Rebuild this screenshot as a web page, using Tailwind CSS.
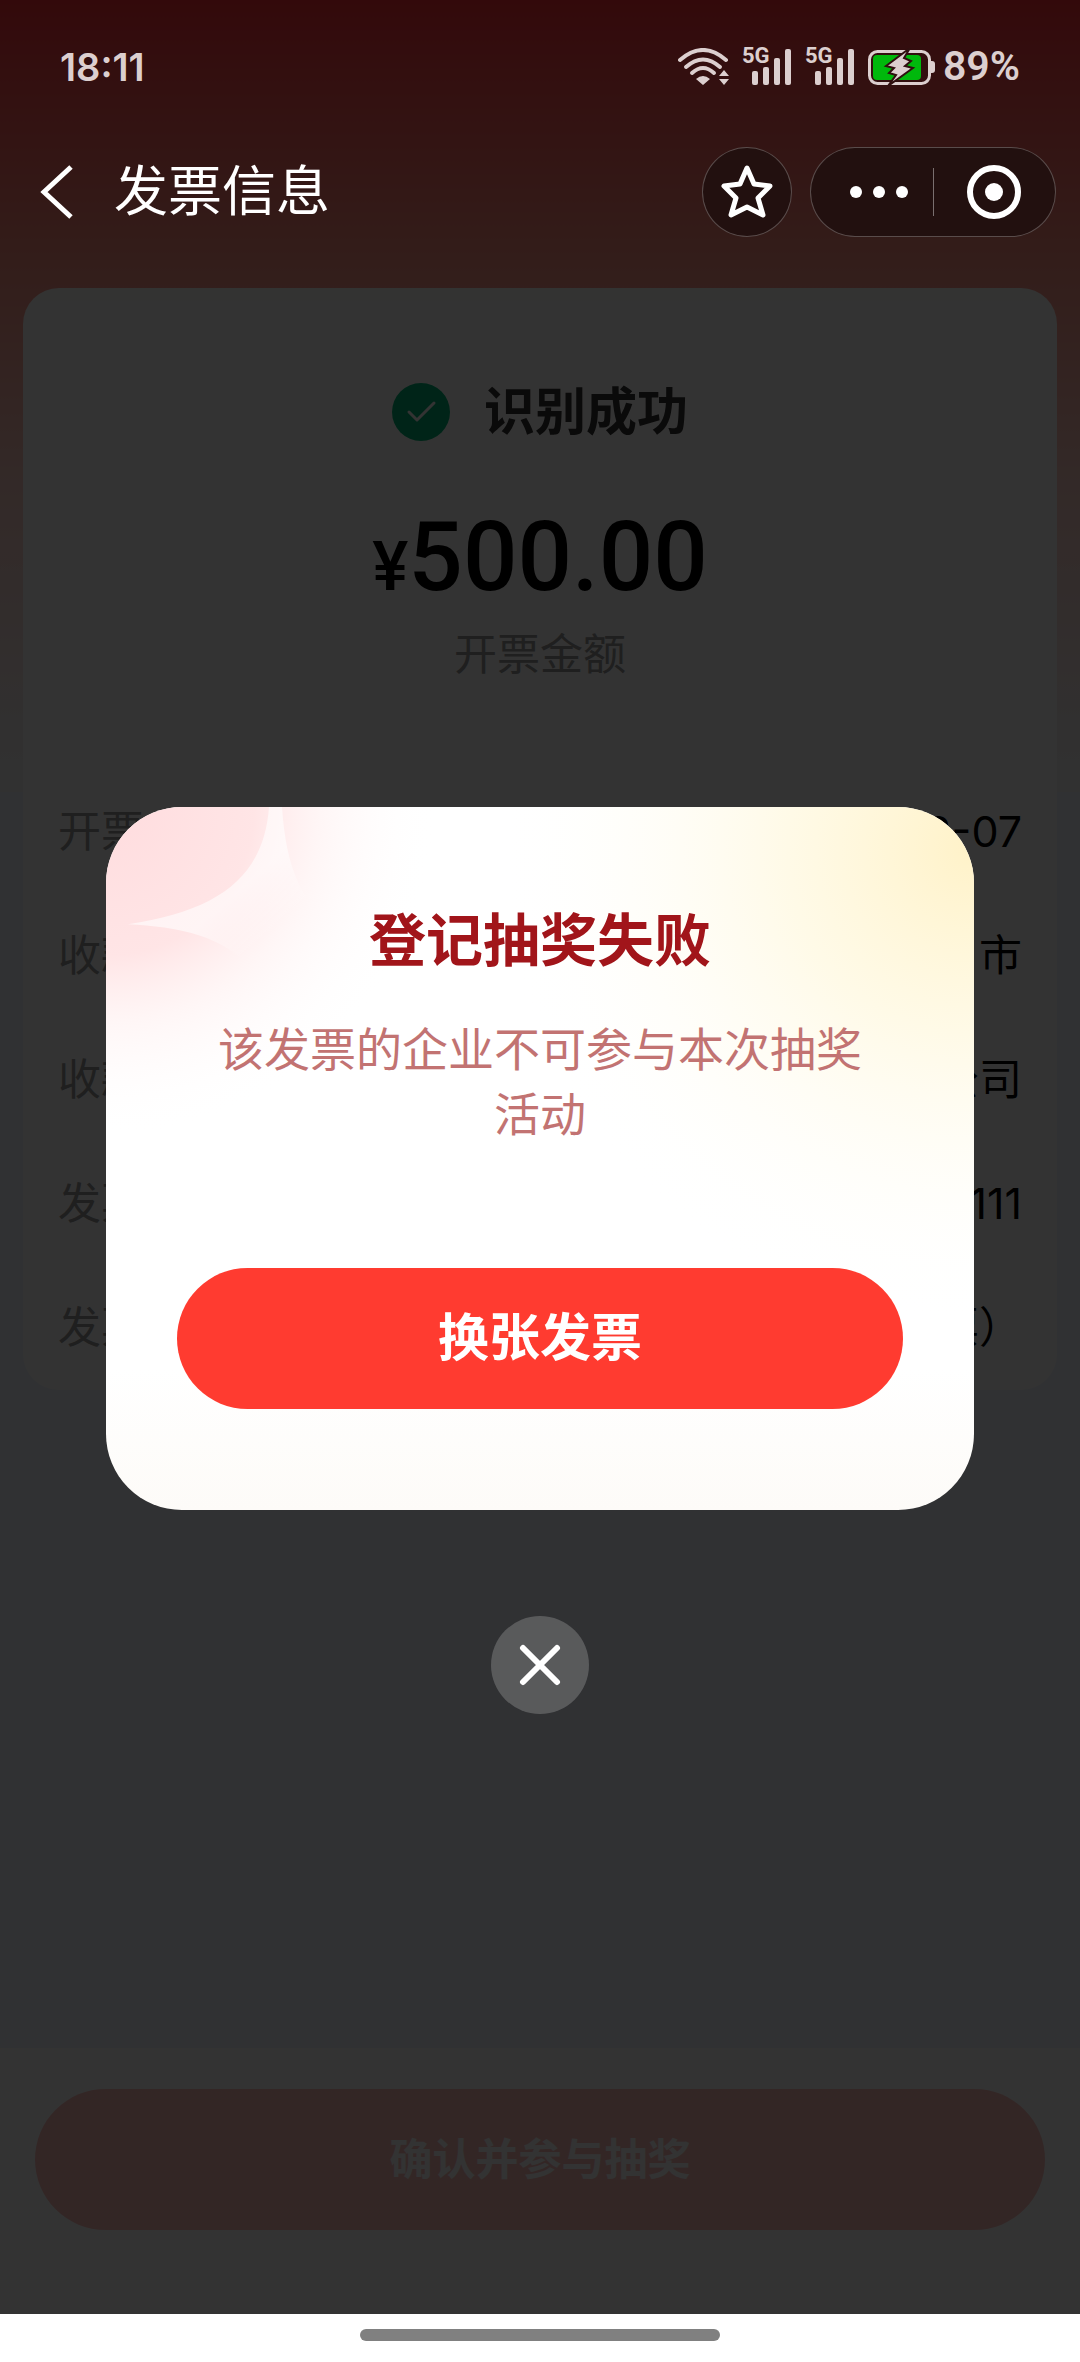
<!DOCTYPE html>
<html lang="zh-CN">
  <head>
    <meta charset="UTF-8" />
    <meta name="viewport" content="width=device-width, initial-scale=1.0" />
    <title>发票信息</title>
    <script src="https://cdn.jsdelivr.net/npm/@tailwindcss/browser@4"></script>
  </head>
  <body
    class="flex flex-col min-h-screen bg-white font-['Inter','Noto_Sans_CJK_SC',sans-serif]"
  >
    <div class="relative flex flex-col flex-1 bg-[#f0f5ff]">
      <!-- red fade behind the header and the top of the card -->
      <div
        class="absolute inset-x-0 top-0 h-[792px] bg-[linear-gradient(to_bottom,#ff3038_0%,#ff8f80_32%,#ffccc4_60%,#f5efef_92%,#f5f5f5_100%)]"
      ></div>

      <!-- status bar -->
      <div
        class="relative z-20 flex items-center justify-between h-[134px] px-[60px] text-[#dccfcf]"
      >
        <span class="text-[38px] font-semibold">18:11</span>
        <div class="flex items-center gap-[13px]">
          <svg class="w-[51px] h-[38px]" viewBox="0 0 51 38" fill="none">
            <path d="M2 12 Q25 -8 48 12" stroke="currentColor" stroke-width="4" stroke-linecap="round" />
            <path d="M8 19 Q25 4 42 19" stroke="currentColor" stroke-width="4" stroke-linecap="round" />
            <path d="M14 25 Q25 15 36 25" stroke="currentColor" stroke-width="4" stroke-linecap="round" />
            <path d="M18 31 Q25 25 32 31 L25 37Z M41 28 L46 22 L51 28Z M41 31 H51 L46 37Z" fill="currentColor" />
          </svg>
          <div class="relative w-[50px] h-[38px]">
            <span class="absolute left-0 top-0 text-[22px] leading-[16px] font-bold font-['Roboto']">5G</span>
            <svg class="w-[50px] h-[38px]" viewBox="0 0 50 38" fill="currentColor">
              <rect x="10" y="23" width="6" height="14" rx="2" />
              <rect x="21" y="19" width="6" height="18" rx="2" />
              <rect x="32" y="10" width="6" height="27" rx="2" />
              <rect x="43" y="1" width="6" height="36" rx="2" />
            </svg>
          </div>
          <div class="relative w-[50px] h-[38px]">
            <span class="absolute left-0 top-0 text-[22px] leading-[16px] font-bold font-['Roboto']">5G</span>
            <svg class="w-[50px] h-[38px]" viewBox="0 0 50 38" fill="currentColor">
              <rect x="10" y="23" width="6" height="14" rx="2" />
              <rect x="21" y="19" width="6" height="18" rx="2" />
              <rect x="32" y="10" width="6" height="27" rx="2" />
              <rect x="43" y="1" width="6" height="36" rx="2" />
            </svg>
          </div>
          <div class="flex items-center gap-[8px]">
            <svg class="w-[67px] h-[38px]" viewBox="0 0 67 38" fill="none">
              <rect x="1.5" y="3.5" width="60" height="32" rx="8" stroke="currentColor" stroke-width="3" />
              <rect x="5" y="7" width="48" height="25" rx="4" fill="#00b80c" />
              <path d="M63 13 h1 a3 3 0 0 1 3 3 v6 a3 3 0 0 1 -3 3 h-1Z" fill="currentColor" />
              <path d="M42 0 L18 18 L26 20 L21 25 L28 27 L20 38 L45 20 L37 18 L43 13 L36 10Z" fill="currentColor" stroke="#2f0f0f" stroke-width="2" />
            </svg>
            <span class="text-[41px] font-semibold font-['Roboto']">89%</span>
          </div>
        </div>
      </div>

      <!-- title bar -->
      <header
        class="relative z-20 flex items-center h-[116px] pl-[40px] pr-[24px] text-white"
      >
        <button aria-label="返回">
          <svg class="w-[34px] h-[54px]" viewBox="0 0 34 54" fill="none">
            <path d="M31 2 L4 27 L31 52" stroke="currentColor" stroke-width="5" />
          </svg>
        </button>
        <h1 class="ml-[40px] flex-1 text-[54px] leading-[80px] font-normal">发票信息</h1>
        <button
          aria-label="收藏"
          class="flex items-center justify-center size-[90px] rounded-full border border-white/25 bg-[#22100f]"
        >
          <svg class="size-[54px]" viewBox="0 0 54 54" fill="none">
            <path d="M27 3 L34 19 L50 21 L38 33 L43 50 L27 42 L11 50 L16 33 L4 21 L20 19Z" stroke="currentColor" stroke-width="5" stroke-linejoin="round" />
          </svg>
        </button>
        <div
          class="ml-[18px] flex items-center h-[90px] w-[246px] rounded-full border border-white/25 bg-[#22100f]"
        >
          <button aria-label="更多" class="flex w-1/2 items-center justify-center pl-[14px]">
            <svg class="w-[58px] h-[12px]" viewBox="0 0 58 12" fill="currentColor">
              <circle cx="6" cy="6" r="6" />
              <circle cx="29" cy="6" r="6" />
              <circle cx="52" cy="6" r="6" />
            </svg>
          </button>
          <div class="w-px h-[48px] bg-white/40"></div>
          <button aria-label="关闭小程序" class="flex w-1/2 items-center justify-center">
            <svg class="size-[54px]" viewBox="0 0 54 54" fill="none">
              <circle cx="27" cy="27" r="24" stroke="currentColor" stroke-width="6" />
              <circle cx="27" cy="27" r="9" fill="currentColor" />
            </svg>
          </button>
        </div>
      </header>

      <!-- invoice card -->
      <main class="relative flex-1 px-[23px] pt-[38px] text-[43px]">
        <section class="rounded-[36px] bg-white/97 px-[35px] pt-[91px] pb-[30px]">
          <div class="flex items-center justify-center gap-[34px]">
            <svg class="size-[58px]" viewBox="0 0 58 58" fill="none">
              <circle cx="29" cy="29" r="29" fill="#00b578" />
              <path d="M17 29 L25 37 L42 20" stroke="#fff" stroke-width="3" stroke-linecap="round" stroke-linejoin="round" />
            </svg>
            <h2 class="text-[51px] leading-[66px] font-bold text-[#333]">识别成功</h2>
          </div>
          <p class="mt-[55px] text-center text-[96px] leading-[114px] font-medium text-black font-['Roboto']">
            <span class="text-[68px]">¥</span>500.00
          </p>
          <p class="text-center leading-[60px] text-[#999]">开票金额</p>
          <dl class="mt-[115px] text-black">
            <div class="flex justify-between h-[124px]">
              <dt class="text-[#999]">开票日期</dt>
              <dd>2025-12-07</dd>
            </div>
            <div class="flex justify-between h-[124px]">
              <dt class="text-[#999]">收款城市</dt>
              <dd>市</dd>
            </div>
            <div class="flex justify-between h-[124px]">
              <dt class="text-[#999]">收款企业</dt>
              <dd>公司</dd>
            </div>
            <div class="flex justify-between h-[124px]">
              <dt class="text-[#999]">发票号码</dt>
              <dd>111</dd>
            </div>
            <div class="flex justify-between">
              <dt class="text-[#999]">发票类型</dt>
              <dd>普通发票）</dd>
            </div>
          </dl>
        </section>
      </main>

      <footer class="relative bg-white px-[35px] pt-[41px] pb-[84px]">
        <button class="w-full h-[141px] rounded-full bg-[#ffbebb] text-[43px] font-bold text-white">
          确认并参与抽奖
        </button>
      </footer>

      <!-- dialog -->
      <div
        class="absolute inset-0 z-10 flex flex-col items-center bg-black/80 px-[106px] pt-[807px]"
      >
        <div
          role="dialog"
          aria-labelledby="dialogTitle"
          class="relative w-full overflow-hidden rounded-[76px] bg-linear-to-b from-white from-80% to-[#fdfbf8] px-[71px] pt-[94px] pb-[101px] text-center"
        >
          <svg class="absolute inset-0 size-full" viewBox="0 0 868 702" preserveAspectRatio="none">
            <defs>
              <radialGradient id="pink" gradientUnits="userSpaceOnUse" cx="0" cy="0" r="330">
                <stop offset="0" stop-color="#ffdcde" />
                <stop offset="0.45" stop-color="#ffe2e3" stop-opacity="0.9" />
                <stop offset="0.65" stop-color="#fff0f0" stop-opacity="0.6" />
                <stop offset="1" stop-color="#fff" stop-opacity="0" />
              </radialGradient>
              <radialGradient id="gold" gradientUnits="userSpaceOnUse" cx="868" cy="40" r="480">
                <stop offset="0" stop-color="#fff2c8" />
                <stop offset="0.4" stop-color="#fff9e2" stop-opacity="0.8" />
                <stop offset="1" stop-color="#fff" stop-opacity="0" />
              </radialGradient>
              <linearGradient id="ray" gradientUnits="userSpaceOnUse" x1="90" y1="50" x2="160" y2="130">
                <stop offset="0" stop-color="#fff" stop-opacity="0.6" />
                <stop offset="0.5" stop-color="#fff" stop-opacity="0.6" />
                <stop offset="1" stop-color="#fff" stop-opacity="0" />
              </linearGradient>
            </defs>
            <rect width="868" height="702" fill="url(#pink)" />
            <rect width="868" height="702" fill="url(#gold)" />
            <path d="M163 0 C158 70 112 104 22 117 C80 120 135 130 165 190 L240 130 C195 100 180 60 176 0Z" fill="url(#ray)" />
          </svg>
          <div class="relative">
            <h2 id="dialogTitle" class="text-[57px] leading-[80px] font-bold text-[#a1151a]">
              登记抽奖失败
            </h2>
            <p class="mt-[36px] px-[32px] text-[46px] leading-[65px] text-[#c27372]">
              该发票的企业不可参与本次抽奖活动
            </p>
            <button class="mt-[121px] w-full h-[141px] rounded-full bg-[#ff3b30] text-[51px] font-bold text-white">
              换张发票
            </button>
          </div>
        </div>
        <button
          aria-label="关闭"
          class="mt-[106px] flex items-center justify-center size-[98px] rounded-full bg-white/20 text-white"
        >
          <svg class="size-[42px]" viewBox="0 0 42 42" fill="none">
            <path d="M4 4 L38 38 M38 4 L4 38" stroke="currentColor" stroke-width="6" stroke-linecap="round" />
          </svg>
        </button>
      </div>
    </div>

    <!-- home indicator -->
    <div class="flex justify-center h-[48px] pt-[15px] bg-white">
      <div class="w-1/3 h-[12px] rounded-full bg-[#808080]"></div>
    </div>
  </body>
</html>
